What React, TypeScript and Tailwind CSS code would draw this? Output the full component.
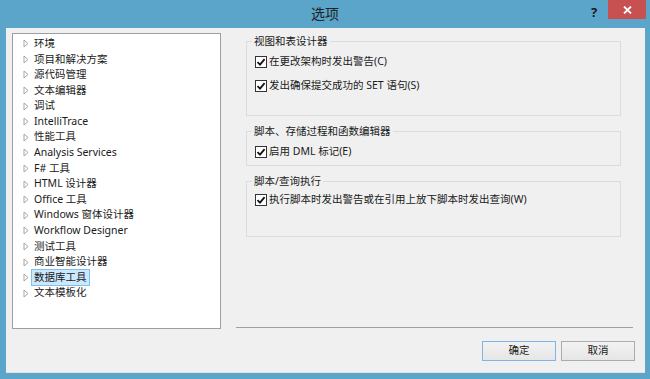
import React from "react";

const treeItems = [
  "环境",
  "项目和解决方案",
  "源代码管理",
  "文本编辑器",
  "调试",
  "IntelliTrace",
  "性能工具",
  "Analysis Services",
  "F# 工具",
  "HTML 设计器",
  "Office 工具",
  "Windows 窗体设计器",
  "Workflow Designer",
  "测试工具",
  "商业智能设计器",
  "数据库工具",
  "文本模板化",
];

const selected = "数据库工具";

function Arrow() {
  return (
    <svg width="6" height="9" viewBox="0 0 6 9" className="shrink-0">
      <polygon points="1,1 5,4.5 1,8" fill="white" stroke="#a6a6a6" strokeWidth="1" />
    </svg>
  );
}

function Check({ label }: { label: string }) {
  return (
    <div className="flex items-center h-[16px]">
      <span className="w-[12px] h-[12px] border border-[#333] bg-white flex items-center justify-center shrink-0">
        <svg width="10" height="10" viewBox="0 0 10 10">
          <path d="M1.5 5.2 L4 7.6 L8.6 2.2" fill="none" stroke="#111" strokeWidth="1.8" />
        </svg>
      </span>
      <span className="ml-[2px] whitespace-nowrap">{label}</span>
    </div>
  );
}

function Group({
  title,
  height,
  top,
  children,
}: {
  title: string;
  height: string;
  top: string;
  children: React.ReactNode;
}) {
  return (
    <fieldset className={`border border-[#dcdcdc] w-[375px] ${height}`}>
      <legend className="ml-[5px] px-[2px] leading-[16px]">{title}</legend>
      <div className={`pl-[8px] flex flex-col gap-[8px] ${top}`}>{children}</div>
    </fieldset>
  );
}

export default function App() {
  return (
    <div
      className="w-[650px] h-[379px] bg-[#5ba4ca] flex flex-col text-[10.5px] text-[#1a1a1a]"
      style={{ fontFamily: '"Noto Sans", "Noto Sans CJK SC", sans-serif' }}
    >
      {/* title bar */}
      <div className="h-[28px] relative flex items-center justify-center">
        <span className="text-[14px] text-[#222] -mt-[1px]">选项</span>
        <span className="absolute left-[591px] top-[3px] text-[13px] font-bold text-[#1a1a1a]">?</span>
        <div className="absolute left-[608px] top-0 w-[38px] h-[19px] bg-[#c75050] flex items-center justify-center">
          <svg width="9" height="8" viewBox="0 0 9 8">
            <path d="M1 0.5 L8 7.5 M8 0.5 L1 7.5" stroke="white" strokeWidth="1.8" />
          </svg>
        </div>
      </div>

      {/* client */}
      <div className="flex-1 ml-[6px] mr-[5px] mb-[6px] bg-[#f0f0f0] flex flex-col pt-[5px] px-[6px] border-b border-[#e2e2e2]">
        <div className="flex h-[296px]">
          {/* tree */}
          <div className="w-[209px] h-full border border-[#9ca0a6] bg-white pt-[2px]">
            {treeItems.map((item) => (
              <div key={item} className="h-[15.6px] flex items-center pl-[10px]">
                <Arrow />
                <span
                  className={`ml-[2px] px-[2px] h-[17px] flex items-center whitespace-nowrap border ${
                    item === selected ? "bg-[#cce8ff] border-[#7fc0f0]" : "border-transparent"
                  }`}
                >
                  {item}
                </span>
              </div>
            ))}
          </div>

          {/* right pane */}
          <div className="flex-1 flex flex-col pl-[15px]">
            <div className="flex flex-col gap-[7px] ml-[10px]">
              <Group title="视图和表设计器" height="h-[83px]" top="pt-[5px]">
                <Check label="在更改架构时发出警告(C)" />
                <Check label="发出确保提交成功的 SET 语句(S)" />
              </Group>
              <Group title="脚本、存储过程和函数编辑器" height="h-[43px]" top="pt-[5px]">
                <Check label="启用 DML 标记(E)" />
              </Group>
              <Group title="脚本/查询执行" height="h-[64px]" top="pt-[3px]">
                <Check label="执行脚本时发出警告或在引用上放下脚本时发出查询(W)" />
              </Group>
            </div>
            <div className="flex-1" />
            <div className="border-t border-[#a0a0a0] mr-[6px] mb-[1px]" />
          </div>
        </div>

        {/* buttons */}
        <div className="mt-[12px] flex justify-end gap-[5px] pr-[4px]">
          <button className="w-[74px] h-[20px] border border-[#7eb4ea] bg-gradient-to-b from-[#f2f2f2] to-[#e6e6e6] flex items-center justify-center">
            确定
          </button>
          <button className="w-[74px] h-[20px] border border-[#acacac] bg-gradient-to-b from-[#f2f2f2] to-[#e6e6e6] flex items-center justify-center">
            取消
          </button>
        </div>
      </div>
    </div>
  );
}
